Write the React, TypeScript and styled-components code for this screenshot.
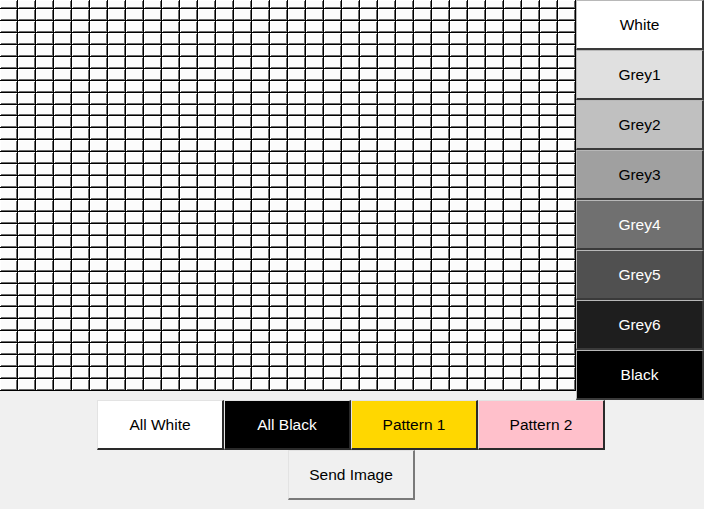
import React from "react";
import styled, { createGlobalStyle } from "styled-components";

const GlobalStyle = createGlobalStyle`
    html, body {
        margin: 0;
        padding: 0;
        background: #f0f0f0;
        font-family: "Liberation Sans", Arial, sans-serif;
    }
`;

const Window = styled.div`
    width: 704px;
    height: 509px;
    display: flex;
    flex-direction: column;
    background: #f0f0f0;
    overflow: hidden;
`;

const TopRow = styled.div`
    display: flex;
    align-items: flex-start;
    height: 400px;
`;

const PixelGrid = styled.div`
    width: 576px;
    height: 391px;
    display: grid;
    grid-template-columns: repeat(32, 1fr);
    grid-template-rows: 9px repeat(32, 1fr);
    background: #fbfbfb;
`;

const Pixel = styled.div`
    background: #fcfcfc;
    border-right: 1px solid #000;
    border-bottom: 1px solid #000;
    box-shadow: inset 1px 1px 0 #ffffff, inset -1px -1px 0 #6a6a6a;
`;

const SidePanel = styled.div`
    width: 128px;
    display: flex;
    flex-direction: column;
`;

const ShadeButton = styled.button<{ $bg: string; $fg: string }>`
    height: 50px;
    box-sizing: border-box;
    background: ${(p) => p.$bg};
    color: ${(p) => p.$fg};
    font-family: "Liberation Sans", Arial, sans-serif;
    font-size: 15.5px;
    padding: 0;
    margin: 0;
    border-top: 1px solid #b8b8b8;
    border-left: 1px solid #b8b8b8;
    border-right: 2px solid #3a3a3a;
    border-bottom: 2px solid #3a3a3a;
    cursor: pointer;
`;

const ActionRow = styled.div`
    display: flex;
    padding-left: 97px;
    height: 50px;
`;

const ActionButton = styled.button<{ $bg: string; $fg: string }>`
    width: 127px;
    height: 50px;
    box-sizing: border-box;
    background: ${(p) => p.$bg};
    color: ${(p) => p.$fg};
    font-family: "Liberation Sans", Arial, sans-serif;
    font-size: 15.5px;
    padding: 0;
    margin: 0;
    border-top: 1px solid #e3e3e3;
    border-left: 1px solid #e3e3e3;
    border-right: 2px solid #2a2a2a;
    border-bottom: 2px solid #2a2a2a;
    cursor: pointer;
`;

const SendRow = styled.div`
    display: flex;
    padding-left: 288px;
`;

const SendButton = styled.button`
    width: 127px;
    height: 50px;
    box-sizing: border-box;
    background: #f0f0f0;
    color: #000;
    font-family: "Liberation Sans", Arial, sans-serif;
    font-size: 15.5px;
    padding: 0;
    border-top: 1px solid #e3e3e3;
    border-left: 1px solid #e3e3e3;
    border-right: 2px solid #7a7a7a;
    border-bottom: 2px solid #7a7a7a;
    cursor: pointer;
`;

const shades = [
    { label: "White", bg: "#ffffff", fg: "#000" },
    { label: "Grey1", bg: "#e0e0e0", fg: "#000" },
    { label: "Grey2", bg: "#c0c0c0", fg: "#000" },
    { label: "Grey3", bg: "#a0a0a0", fg: "#000" },
    { label: "Grey4", bg: "#707070", fg: "#fff" },
    { label: "Grey5", bg: "#505050", fg: "#fff" },
    { label: "Grey6", bg: "#1e1e1e", fg: "#fff" },
    { label: "Black", bg: "#000000", fg: "#fff" },
];

const actions = [
    { label: "All White", bg: "#ffffff", fg: "#000" },
    { label: "All Black", bg: "#000000", fg: "#fff" },
    { label: "Pattern 1", bg: "#ffd700", fg: "#000" },
    { label: "Pattern 2", bg: "#ffc0cb", fg: "#000" },
];

const App: React.FC = () => {
    const cells = Array.from({ length: 33 * 32 }, (_, i) => i);
    return (
        <Window>
            <GlobalStyle />
            <TopRow>
                <PixelGrid>
                    {cells.map((i) => (
                        <Pixel key={i} />
                    ))}
                </PixelGrid>
                <SidePanel>
                    {shades.map((s) => (
                        <ShadeButton key={s.label} $bg={s.bg} $fg={s.fg}>
                            {s.label}
                        </ShadeButton>
                    ))}
                </SidePanel>
            </TopRow>
            <ActionRow>
                {actions.map((a) => (
                    <ActionButton key={a.label} $bg={a.bg} $fg={a.fg}>
                        {a.label}
                    </ActionButton>
                ))}
            </ActionRow>
            <SendRow>
                <SendButton>Send Image</SendButton>
            </SendRow>
        </Window>
    );
};

export default App;
